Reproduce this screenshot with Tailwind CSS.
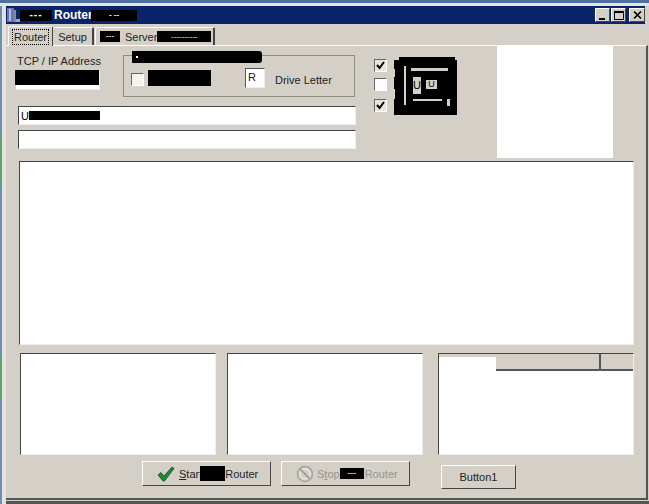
<!DOCTYPE html>
<html>
<head>
<meta charset="utf-8">
<script src="https://cdn.jsdelivr.net/npm/@tailwindcss/browser@4"></script>
</head>
<body class="m-0 overflow-hidden bg-[#d4d0c8]">
<div class="w-[649px] h-[504px] flex flex-col font-['Liberation_Sans',sans-serif] text-[11px] leading-[14px] text-[#222] bg-[#d4d0c8] overflow-hidden">
  <!-- desktop strip -->
  <div class="h-[3px] shrink-0 bg-[#4f6f9f]"></div>
  <div class="h-[3px] shrink-0 bg-[#e6e4de]"></div>
  <div class="flex flex-1 min-h-0">
    <!-- left desktop + frame -->
    <div class="w-[2px] flex flex-col shrink-0">
      <div class="h-[131px] bg-[#6f8fb5]"></div>
      <div class="h-[46px] bg-[#5fa56a]"></div>
      <div class="h-[174px] bg-[#6f8fb5]"></div>
      <div class="h-[43px] bg-[#5fa56a]"></div>
      <div class="flex-1 bg-[#6f8fb5]"></div>
    </div>
    <div class="w-[4px] bg-[#e4e2dc] shrink-0"></div>
    <div class="flex-1 flex flex-col min-w-0">
      <!-- title bar -->
      <div class="h-[18px] shrink-0 mr-[4px] bg-[#0a246a] flex items-center text-white font-bold text-[12px]">
        <svg class="shrink-0" width="14" height="16" viewBox="0 0 14 16">
          <rect x="1" y="1" width="7" height="14" fill="#6f74b8"/>
          <rect x="3" y="2" width="2" height="12" fill="#b9bce0"/>
          <rect x="8" y="3" width="2" height="12" fill="#8a8a9a"/>
          <rect x="10" y="12" width="4" height="3" fill="#a8a8a8"/>
        </svg>
        <div class="w-[32px] h-[11px] bg-black text-[10px] leading-[10px] flex items-center justify-center tracking-[1px]">---</div>
        <span class="ml-[2px] w-[37px] shrink-0 whitespace-nowrap">Router</span>
        <div class="w-[46px] h-[11px] bg-black text-[8px] leading-[8px] flex items-center justify-center">- --</div>
        <div class="ml-auto flex mr-[0px]">
          <div class="w-[15px] h-[14px] bg-[#d4d0c8] border border-t-[#fff] border-l-[#fff] border-r-[#444] border-b-[#444] flex items-end justify-center pb-[1px]"><div class="w-[6px] h-[2px] bg-black -translate-x-[1px]"></div></div>
          <div class="w-[15px] h-[14px] ml-[1px] bg-[#d4d0c8] border border-t-[#fff] border-l-[#fff] border-r-[#444] border-b-[#444] flex items-center justify-center"><div class="w-[10px] h-[9px] border border-black border-t-2"></div></div>
          <div class="w-[16px] h-[14px] ml-[3px] bg-[#d4d0c8] border border-t-[#fff] border-l-[#fff] border-r-[#444] border-b-[#444] flex items-center justify-center">
            <svg width="9" height="8" viewBox="0 0 9 8"><path d="M1 0.5 L8 7.5 M8 0.5 L1 7.5" stroke="#000" stroke-width="1.6"/></svg>
          </div>
        </div>
      </div>
      <!-- tabs -->
      <div class="h-[21px] shrink-0 flex items-end pl-[2px] relative">
        <div class="h-[20px] w-[45px] -mb-[1px] relative z-10 bg-[#d4d0c8] border-t border-l border-white border-r border-r-[#444] rounded-t-[2px] flex items-center justify-center">
          <span class="border border-dotted border-black px-[1px] leading-[14px]">Router</span>
        </div>
        <div class="h-[18px] w-[41px] bg-[#d4d0c8] border-t border-white border-r-2 border-r-[#444] rounded-t-[2px] flex items-center justify-center">Setup</div>
        <div class="h-[18px] w-[120px] ml-[1px] bg-[#d4d0c8] border-t border-l border-white border-r-2 border-r-[#444] rounded-t-[2px] flex items-center pl-[4px] relative">
          <div class="w-[20px] h-[11px] bg-black text-white text-[9px] leading-[9px] flex items-center justify-center">---</div>
          <span class="ml-[5px]">Server</span>
          <div class="w-[54px] h-[11px] bg-black text-white text-[8px] leading-[8px] flex items-center justify-center overflow-hidden">----------</div>
        </div>
      </div>
      <!-- tab pane + window right edge -->
      <div class="flex-1 min-h-0 flex flex-col">
      <div class="flex-1 min-h-0 border-t border-white border-r-2 border-r-[#555] border-b-2 border-b-[#555] flex flex-col mr-[1px]">
        <!-- top row -->
        <div class="flex h-[112px] shrink-0 pl-[10px]">
          <div class="w-[340px] pt-[4px] shrink-0">
            <div class="flex h-[47px]">
              <div class="w-[84px] pt-[4px]">
                <div class="ml-[1px] h-[14px] whitespace-nowrap">TCP / IP Address</div>
                <div class="relative mt-[2px] h-[20px] bg-white border-r border-b border-[#eee]">
                  <div class="absolute -left-[1px] top-0 right-0 h-[15px] bg-black"></div>
                </div>
              </div>
              <div class="ml-[23px] mt-[5px] w-[232px] h-[42px] border border-[#8e8c86] relative flex items-center pl-[7px] pt-[3px]">
                <div class="absolute left-[8px] -top-[5px] w-[130px] h-[12px] bg-black rounded-r-[3px] flex items-center pl-[4px]"><div class="w-[2px] h-[2px] bg-white"></div></div>
                <div class="w-[13px] h-[13px] mt-[4px] bg-[#f4f3f0] border border-t-[#666] border-l-[#666] border-r-white border-b-white shrink-0"></div>
                <div class="ml-[4px] w-[63px] h-[16px] bg-black shrink-0"></div>
                <div class="ml-[34px] w-[20px] h-[20px] bg-white border border-t-[#555] border-l-[#555] border-r-[#eee] border-b-[#eee] pl-[2px] leading-[16px] shrink-0">R</div>
                <span class="ml-[10px] whitespace-nowrap mt-[4px]">Drive Letter</span>
              </div>
            </div>
            <div class="ml-[2px] mt-[9px] w-[338px] h-[19px] bg-white border border-t-[#444] border-l-[#444] border-r-[#eee] border-b-[#eee] flex items-center pl-[2px]">
              <span class="w-[8px] shrink-0 text-black">U</span>
              <div class="w-[71px] h-[9px] bg-black"></div>
            </div>
            <div class="ml-[2px] mt-[5px] w-[338px] h-[19px] bg-white border border-t-[#444] border-l-[#444] border-r-[#eee] border-b-[#eee]"></div>
          </div>
          <!-- checks -->
          <div class="ml-[18px] w-[13px] pt-[13px] shrink-0">
            <div class="w-[13px] h-[13px] bg-[#e8e6e1] border border-t-[#666] border-l-[#666] border-r-white border-b-white flex items-center justify-center">
              <svg width="9" height="9" viewBox="0 0 9 9"><path d="M1 4 L3.5 7 L8 1" fill="none" stroke="#000" stroke-width="2"/></svg>
            </div>
            <div class="mt-[6px] w-[13px] h-[13px] bg-white border border-t-[#666] border-l-[#666] border-r-white border-b-white"></div>
            <div class="mt-[8px] w-[13px] h-[13px] bg-[#e8e6e1] border border-t-[#666] border-l-[#666] border-r-white border-b-white flex items-center justify-center">
              <svg width="9" height="9" viewBox="0 0 9 9"><path d="M1 4 L3.5 7 L8 1" fill="none" stroke="#000" stroke-width="2"/></svg>
            </div>
          </div>
          <!-- redacted block -->
          <div class="ml-[7px] mt-[11px] w-[63px] h-[58px] bg-black relative shrink-0 overflow-hidden">
            <div class="absolute left-0 top-0 w-[5px] h-[3px] bg-[#d4d0c8]"></div>
            <div class="absolute right-0 top-0 w-[2px] h-[3px] bg-[#d4d0c8]"></div>
            <div class="absolute left-0 top-[12px] w-[1px] h-[8px] bg-[#d4d0c8]"></div>
            <div class="absolute left-0 top-[32px] w-[1px] h-[10px] bg-[#d4d0c8]"></div>
            <div class="absolute left-[10px] top-[9px] w-[2px] h-[39px] bg-[#d4d0c8]"></div>
            <div class="absolute left-[17px] top-[11px] w-[37px] h-[3px] bg-[#d4d0c8]"></div>
            <div class="absolute left-[19px] top-[20px] w-[8px] h-[17px] bg-[#d4d0c8] text-[11px] leading-[17px] text-black">U</div>
            <div class="absolute left-[32px] top-[23px] w-[11px] h-[9px] bg-[#d4d0c8] text-[9px] leading-[9px] text-black text-center">U</div>
            <div class="absolute left-[19px] top-[42px] w-[29px] h-[2px] bg-[#d4d0c8]"></div>
            <div class="absolute left-[53px] top-[42px] w-[3px] h-[7px] bg-[#d4d0c8]"></div>
          </div>
          <div class="ml-[40px] w-[116px] h-[112px] bg-white shrink-0"></div>
        </div>
        <!-- memo -->
        <div class="ml-[13px] mt-[3px] w-[615px] h-[184px] shrink-0 bg-white border border-t-[#444] border-l-[#444] border-r-[#eee] border-b-[#eee]"></div>
        <!-- panels -->
        <div class="ml-[14px] mt-[8px] h-[102px] flex shrink-0">
          <div class="w-[196px] bg-white border border-t-[#444] border-l-[#444] border-r-[#eee] border-b-[#eee]"></div>
          <div class="ml-[11px] w-[196px] bg-white border border-t-[#444] border-l-[#444] border-r-[#eee] border-b-[#eee]"></div>
          <div class="ml-[15px] w-[196px] bg-white border border-t-[#444] border-l-[#444] border-r-[#eee] border-b-[#eee] flex flex-col">
            <div class="h-[17px] flex bg-white">
              <div class="w-[57px] h-[3px] bg-[#d4d0c8]"></div>
              <div class="w-[105px] bg-[#d4d0c8] border-b-2 border-b-[#555] border-r-2 border-r-[#555]"></div>
              <div class="flex-1 bg-[#d4d0c8] border-b-2 border-b-[#555]"></div>
            </div>
          </div>
        </div>
        <!-- buttons -->
        <div class="flex items-start shrink-0 ml-[136px] mt-[6px]">
          <div class="w-[129px] h-[25px] bg-[#d4d0c8] border border-t-white border-l-white border-r-[#444] border-b-[#444] flex items-center pl-[14px] whitespace-nowrap">
            <svg width="18" height="16" viewBox="0 0 18 16"><path d="M1 9 L4 6.5 L7 10 L15 1 L17 2.5 L7.5 15 L6 15 Z" fill="#1f8a32" stroke="#0d4f1a" stroke-width="0.8"/></svg>
            <span class="ml-[4px]"><span class="underline">S</span>tart</span>
            <div class="w-[25px] h-[15px] bg-black -ml-[2px]"></div>
            <span>Router</span>
          </div>
          <div class="ml-[10px] w-[129px] h-[25px] bg-[#d4d0c8] border border-t-white border-l-white border-r-[#444] border-b-[#444] flex items-center pl-[14px] whitespace-nowrap text-[#96948e]">
            <svg width="18" height="18" viewBox="0 0 18 18"><circle cx="9" cy="9" r="7.5" fill="none" stroke="#a5a29b" stroke-width="1.5"/><circle cx="9" cy="9" r="5" fill="none" stroke="#f2f1ee" stroke-width="1"/><path d="M4.5 4.5 L13.5 13.5" stroke="#a5a29b" stroke-width="2"/></svg>
            <span class="ml-[3px]">S<span class="underline">t</span>op</span>
            <div class="w-[24px] h-[11px] bg-black text-white text-[9px] leading-[9px] flex items-center justify-center">---</div>
            <span class="ml-[1px]">Router</span>
          </div>
          <div class="ml-[31px] mt-[4px] w-[75px] h-[24px] bg-[#d4d0c8] border border-t-white border-l-white border-r-[#444] border-b-[#444] flex items-center justify-center">Button1</div>
        </div>
      </div>
      <div class="h-[1px] shrink-0 bg-[#d4d0c8]"></div>
      <div class="h-[3px] shrink-0 bg-[#555]"></div>
      </div>
    </div>
  </div>
</div>
</body>
</html>
